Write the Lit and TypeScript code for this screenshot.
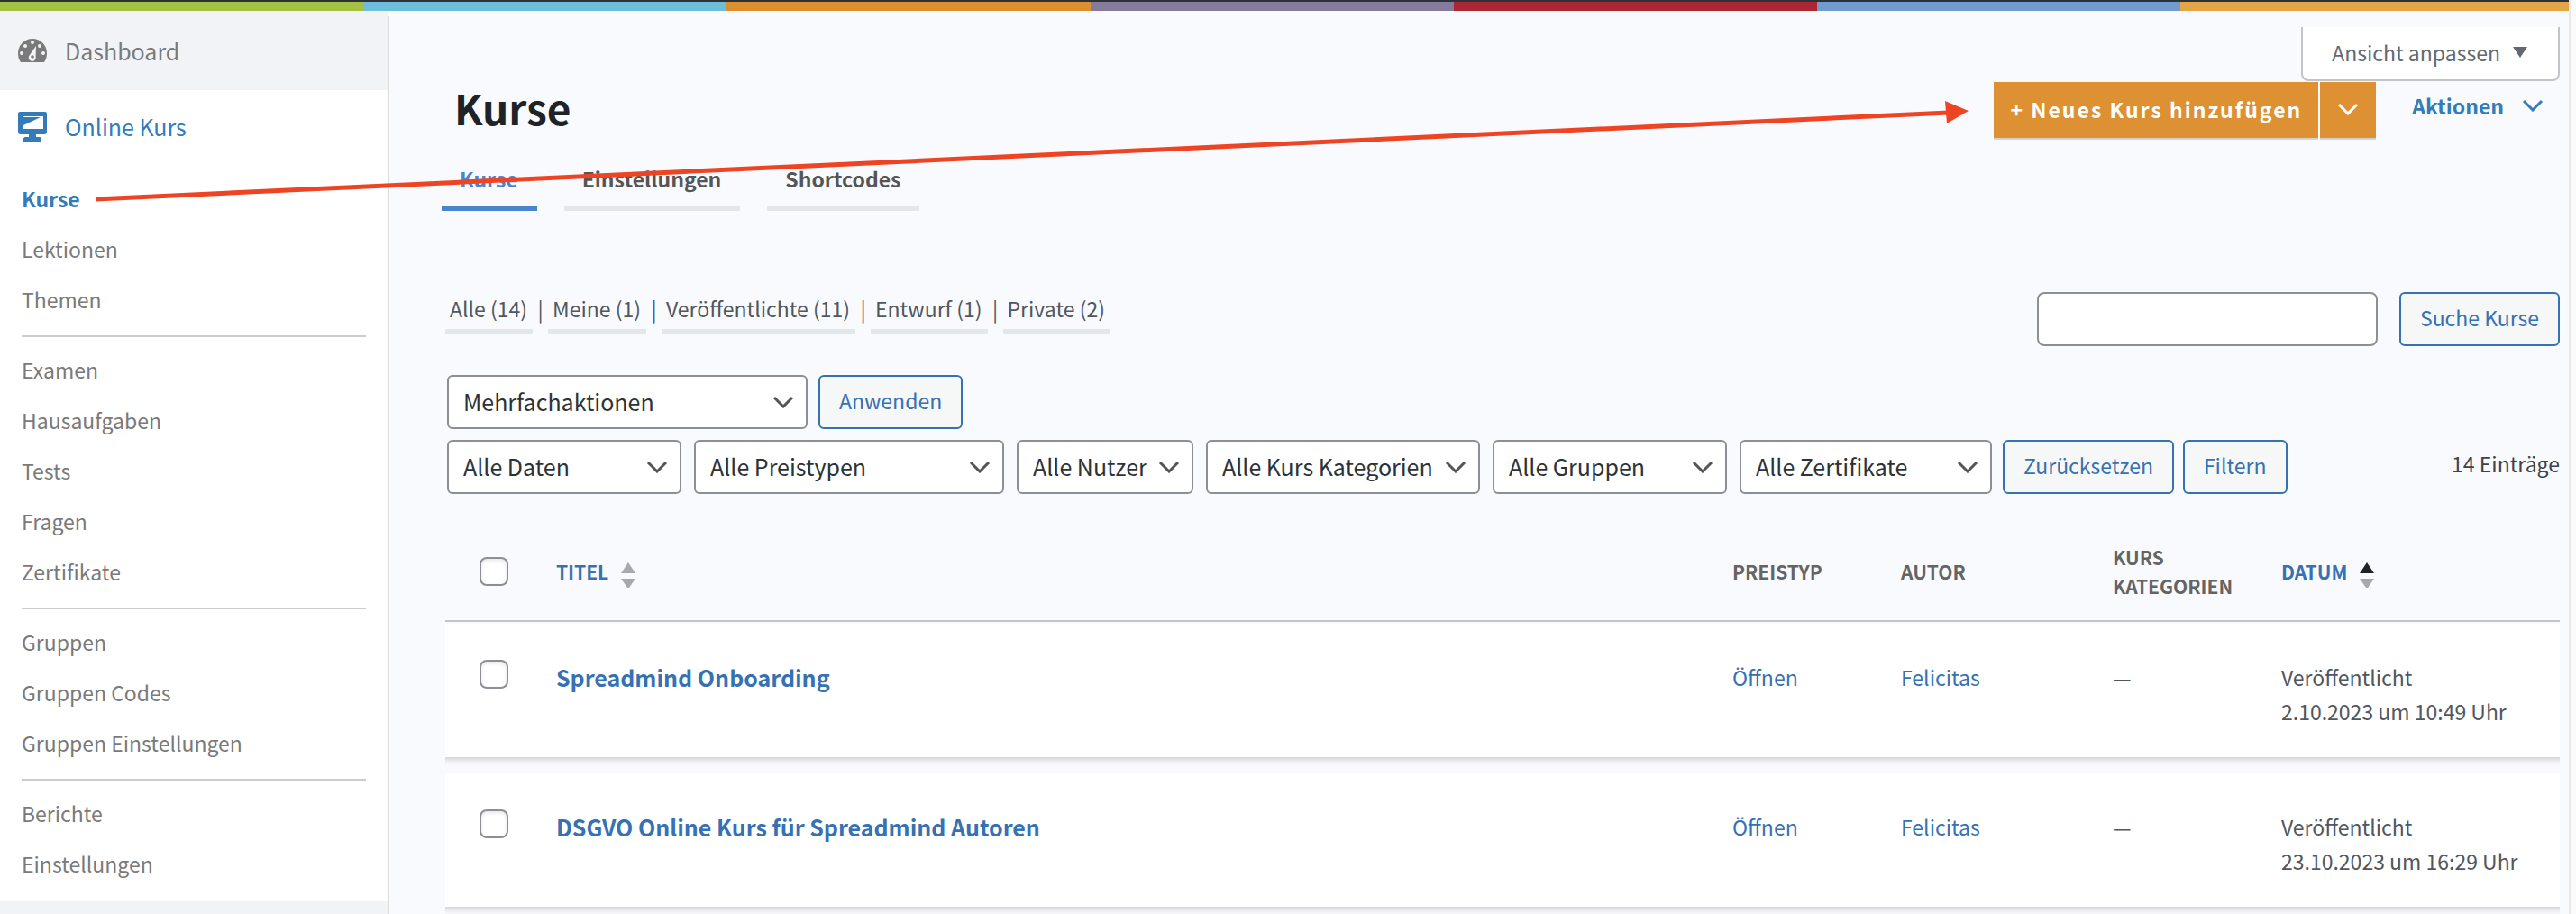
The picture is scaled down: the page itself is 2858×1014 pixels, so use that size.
import { LitElement, html, css, svg } from "lit";
import { customElement } from "lit/decorators.js";
import { classMap } from "lit/directives/class-map.js";

interface Course {
  title: string;
  price: string;
  author: string;
  categories: string;
  date: string;
}

const MENU: string[][] = [
  ["Kurse", "Lektionen", "Themen"],
  ["Examen", "Hausaufgaben", "Tests", "Fragen", "Zertifikate"],
  ["Gruppen", "Gruppen Codes", "Gruppen Einstellungen"],
  ["Berichte", "Einstellungen"],
];

const TABS = ["Kurse", "Einstellungen", "Shortcodes"];

const VIEWS = ["Alle (14)", "Meine (1)", "Veröffentlichte (11)", "Entwurf (1)", "Private (2)"];

const FILTERS = [
  { label: "Alle Daten", size: "s260" },
  { label: "Alle Preistypen", size: "s344" },
  { label: "Alle Nutzer", size: "s196" },
  { label: "Alle Kurs Kategorien", size: "s304" },
  { label: "Alle Gruppen", size: "s260" },
  { label: "Alle Zertifikate", size: "s280" },
];

const COURSES: Course[] = [
  {
    title: "Spreadmind Onboarding",
    price: "Öffnen",
    author: "Felicitas",
    categories: "—",
    date: "2.10.2023 um 10:49 Uhr",
  },
  {
    title: "DSGVO Online Kurs für Spreadmind Autoren",
    price: "Öffnen",
    author: "Felicitas",
    categories: "—",
    date: "23.10.2023 um 16:29 Uhr",
  },
];

const chevron = () => html`
  <svg class="chevron" viewBox="0 0 24 14" width="24" height="14" aria-hidden="true">
    <path d="M2 2 L12 12 L22 2" fill="none" stroke="currentColor" stroke-width="3" />
  </svg>
`;

const sorter = (active: boolean) => html`
  <svg class="sorter" viewBox="0 0 16 28" width="16" height="28" aria-hidden="true">
    <path d="M8 0 L16 12 H0 Z" fill=${active ? "#1d2327" : "#a7aaad"} />
    <path d="M0 18 H16 L9 28 H7 Z" fill="#a7aaad" />
  </svg>
`;

const dots = [
  [4, 16],
  [8, 8],
  [16, 4],
  [24, 8],
  [28, 16],
];

@customElement("app-root")
export class AppRoot extends LitElement {
  static styles = css`
    :host {
      display: block;
      font-family: "Noto Sans CJK SC", "Noto Sans", sans-serif;
      font-size: 23px;
      color: #50575e;
    }
    * {
      box-sizing: border-box;
    }
    a {
      color: inherit;
      text-decoration: none;
    }
    button,
    input,
    select {
      font: inherit;
      margin: 0;
    }
    svg {
      display: block;
      flex: none;
    }
    .page {
      position: relative;
      display: flex;
      height: 100vh;
      overflow: hidden;
      background: #fafafa;
    }
    .frame {
      flex: 1;
      min-width: 0;
      display: flex;
      flex-direction: column;
      background: #f9fafe;
    }
    .track {
      width: 8px;
      border-left: 2px solid #e8e8e8;
    }
    .stripes {
      flex: none;
      height: 12px;
      border-top: 2px solid #2c3338;
      background: linear-gradient(
        to right,
        #a5c141 0 14.14%,
        #6ebedb 14.14% 28.28%,
        #dd8f2f 28.28% 42.44%,
        #857b9c 42.44% 56.58%,
        #ac2634 56.58% 70.72%,
        #719cd0 70.72% 84.86%,
        #e4a547 84.86%
      );
    }
    .columns {
      flex: 1;
      min-height: 0;
      display: flex;
    }

    .sidebar {
      flex: none;
      width: 430px;
      background: #f2f3f7;
      color: #7a7a7a;
    }
    .top-link {
      display: flex;
      align-items: center;
      gap: 20px;
      height: 88px;
      padding: 0 20px;
      font-size: 25px;
    }
    .current {
      height: 84px;
      padding-bottom: 4px;
      color: #347cb8;
    }
    .group {
      background: #fff;
    }
    .menu {
      margin: 0;
      padding: 8px 24px 14px;
      list-style: none;
    }
    .menu-link {
      display: block;
      line-height: 56px;
    }
    .active {
      font-weight: 700;
      color: #347cb8;
    }
    .rule {
      height: 2px;
      margin: 12px 0 8px;
      background: #ccc;
    }

    .main {
      flex: 1;
      min-width: 0;
      margin-top: 6px;
      padding: 12px 10px 0 58px;
      border-left: 2px solid #dcdcdc;
    }
    .screen-options {
      display: flex;
      align-items: center;
      gap: 14px;
      height: 60px;
      margin-left: auto;
      padding: 0 34px 2px 32px;
      border: 2px solid #c3c4c7;
      border-top: 0;
      border-radius: 0 0 8px 8px;
      background: #fff;
      color: #646970;
    }
    .title-row {
      display: flex;
      align-items: flex-start;
      margin-top: 1px;
    }
    .title {
      flex: 1;
      margin: 0;
      padding-left: 14px;
      font-size: 46px;
      line-height: 56px;
      font-weight: 700;
      color: #1d2327;
    }
    .add {
      height: 64px;
      padding: 0 18px 2px;
      border: 0;
      border-bottom: 2px solid #d3d4d6;
      background: #dd9132;
      color: #fff;
      font-weight: 700;
      letter-spacing: 2px;
    }
    .add-more {
      display: flex;
      align-items: center;
      justify-content: center;
      width: 62px;
      margin-left: 2px;
    }
    .actions {
      display: flex;
      align-items: center;
      gap: 20px;
      height: 52px;
      margin-left: 40px;
      padding: 0 18px 0 0;
      border: 0;
      background: none;
      color: #347cb8;
      font-weight: 700;
    }
    .tabs {
      display: flex;
      gap: 30px;
      margin-top: 25px;
    }
    .tab {
      padding: 0 21px 12px 20px;
      border-bottom: 6px solid #e3e7ea;
      line-height: 36px;
      font-weight: 700;
      color: #555;
    }
    .tab-on {
      border-color: #4a84cd;
      color: #4a84cd;
    }
    .views-row {
      display: flex;
      align-items: flex-start;
      margin: 90px 0 32px 4px;
    }
    .views {
      flex: 1;
      display: flex;
      margin: 0;
      padding: 0;
      list-style: none;
      line-height: 36px;
    }
    .view {
      display: flex;
    }
    .view-link {
      padding: 0 6px 5px 5px;
      border-bottom: 6px solid #e2e8ea;
    }
    .bar {
      width: 17px;
      text-align: center;
    }
    .search {
      display: flex;
      gap: 24px;
    }
    .search-box {
      width: 378px;
      height: 60px;
      border: 2px solid #8c8f94;
      border-radius: 8px;
      background: #fff;
    }
    .button {
      height: 60px;
      padding: 0 21px 4px;
      border: 2px solid #3671b3;
      border-radius: 6px;
      background: #f6f7f7;
      color: #3671b3;
    }
    .tools {
      display: flex;
      align-items: center;
      margin: 0 0 12px 6px;
    }
    .filters {
      gap: 14px;
      margin-bottom: 0;
    }
    .bulk {
      gap: 12px;
    }
    .filter-buttons {
      display: flex;
      gap: 10px;
      margin-left: -2px;
    }
    .picker {
      display: grid;
      align-items: center;
    }
    .select {
      grid-area: 1 / 1;
      width: 100%;
      height: 60px;
      padding: 0 40px 2px 16px;
      border: 2px solid #8c8f94;
      border-radius: 6px;
      background: #fff;
      color: #2c3338;
      font-size: 25px;
      appearance: none;
    }
    .mark {
      grid-area: 1 / 1;
      justify-self: end;
      margin-right: 15px;
      color: #555;
      pointer-events: none;
    }
    .s196 {
      width: 196px;
    }
    .s260 {
      width: 260px;
    }
    .s280 {
      width: 280px;
    }
    .s304 {
      width: 304px;
    }
    .s344 {
      width: 344px;
    }
    .s400 {
      width: 400px;
    }
    .count {
      margin-left: auto;
      padding-bottom: 8px;
      color: #3c434a;
    }

    .table-wrap {
      margin: 32px 0 0 4px;
    }
    .table {
      width: 100%;
      table-layout: fixed;
      border-collapse: separate;
      border-spacing: 0;
    }
    .col-check {
      width: 103px;
    }
    .col-price {
      width: 187px;
    }
    .col-author {
      width: 235px;
    }
    .col-date {
      width: 329px;
    }
    .head {
      height: 110px;
      padding: 0 20px;
      border-bottom: 2px solid #c3c4c7;
      text-align: left;
      vertical-align: middle;
      font-size: 21px;
      line-height: 32px;
      font-weight: 700;
      color: #646464;
    }
    .sort {
      display: flex;
      align-items: center;
      gap: 14px;
      color: #3671b3;
    }
    .sorter {
      margin: 6px 0 -2px;
    }
    .cell {
      height: 166px;
      padding: 42px 20px 0;
      vertical-align: top;
      line-height: 38px;
      background:
        linear-gradient(#f9fafe, #f9fafe) top / 100% 2px no-repeat,
        linear-gradient(#d5d5da, #efeff4 5px, #faf9fe 9px) bottom / 100% 16px no-repeat,
        #fff;
    }
    .check-cell {
      padding-left: 38px;
      padding-right: 0;
    }
    .check {
      display: block;
      appearance: none;
      width: 32px;
      height: 32px;
      border: 2px solid #8c8f94;
      border-radius: 8px;
      background: #fff;
      box-shadow: inset 0 2px 4px rgba(0, 0, 0, 0.1);
    }
    .link {
      color: #3671b3;
    }
    .name {
      font-size: 25px;
      font-weight: 700;
    }
    .pointer {
      position: absolute;
      left: 0;
      top: 0;
      width: calc(100% - 674px);
      height: 240px;
      pointer-events: none;
    }
  `;

  private renderSidebar() {
    return html`
      <nav class="sidebar">
        <a class="top-link" href="#dashboard">
          <svg viewBox="0 0 32 26" width="32" height="26" aria-hidden="true">
            <path
              d="M3 26 C1 23 0 20 0 16 C0 7 7 0 16 0 C25 0 32 7 32 16 C32 20 31 23 29 26 Z"
              fill="#7a7a7a"
            />
            ${dots.map(([x, y]) => svg`<circle cx=${x} cy=${y} r="2" fill="#f2f3f7" />`)}
            <path d="M20 8 L19.600 20 A4 4 0 1 1 12.500 18.500 Z" fill="#f2f3f7" />
            <circle cx="16" cy="20" r="1.800" fill="#7a7a7a" />
          </svg>
          <span>Dashboard</span>
        </a>
        <div class="group">
          <a class="top-link current" href="#online-kurs">
            <svg viewBox="0 0 32 33" width="32" height="33" aria-hidden="true">
              <path
                fill="#347cb8"
                fill-rule="evenodd"
                d="M2 0 H30 Q32 0 32 2 V22 Q32 25 29 25 H20 V28 H24 Q26 28 26 30 V33 H6 V30 Q6 28 8 28 H12 V25 H3 Q0 25 0 22 V2 Q0 0 2 0 Z M5 5 V19 H28 V5 Z"
              />
              <path fill="#347cb8" d="M6 6 H25 L6 15 Z" />
            </svg>
            <span>Online Kurs</span>
          </a>
          <ul class="menu">
            ${MENU.map(
              (items, g) => html`
                ${g ? html`<li class="rule" role="separator"></li>` : ""}
                ${items.map(
                  (item, i) => html`
                    <li>
                      <a
                        class=${classMap({ "menu-link": true, active: g === 0 && i === 0 })}
                        href="#menu"
                        >${item}</a
                      >
                    </li>
                  `
                )}
              `
            )}
          </ul>
        </div>
      </nav>
    `;
  }

  private renderPicker(label: string, size: string) {
    return html`
      <label class="picker ${size}">
        <select class="select" aria-label=${label}>
          <option>${label}</option>
        </select>
        <span class="mark">${chevron()}</span>
      </label>
    `;
  }

  private renderTable() {
    return html`
      <div class="table-wrap">
        <table class="table">
          <colgroup>
            <col class="col-check" />
            <col />
            <col class="col-price" />
            <col class="col-author" />
            <col class="col-price" />
            <col class="col-date" />
          </colgroup>
          <thead>
            <tr>
              <th class="head check-cell">
                <input class="check" type="checkbox" aria-label="Alle auswählen" />
              </th>
              <th class="head"><a class="sort" href="#titel">TITEL ${sorter(false)}</a></th>
              <th class="head">PREISTYP</th>
              <th class="head">AUTOR</th>
              <th class="head">KURS KATEGORIEN</th>
              <th class="head"><a class="sort" href="#datum">DATUM ${sorter(true)}</a></th>
            </tr>
          </thead>
          <tbody>
            ${COURSES.map(
              (c) => html`
                <tr>
                  <td class="cell check-cell">
                    <input class="check" type="checkbox" aria-label=${c.title} />
                  </td>
                  <td class="cell"><a class="link name" href="#kurs">${c.title}</a></td>
                  <td class="cell"><a class="link" href="#preis">${c.price}</a></td>
                  <td class="cell"><a class="link" href="#autor">${c.author}</a></td>
                  <td class="cell">${c.categories}</td>
                  <td class="cell">Veröffentlicht<br />${c.date}</td>
                </tr>
              `
            )}
          </tbody>
        </table>
      </div>
    `;
  }

  render() {
    return html`
      <div class="page">
        <div class="frame">
          <div class="stripes"></div>
          <div class="columns">
            ${this.renderSidebar()}
            <main class="main">
              <button class="screen-options">
                Ansicht anpassen
                <svg viewBox="0 0 16 12" width="16" height="12" aria-hidden="true">
                  <path d="M0 0 H16 L8 12 Z" fill="#646970" />
                </svg>
              </button>
              <div class="title-row">
                <h1 class="title">Kurse</h1>
                <button class="add">+ Neues Kurs hinzufügen</button>
                <button class="add add-more" aria-label="Mehr">${chevron()}</button>
                <button class="actions">Aktionen ${chevron()}</button>
              </div>
              <nav class="tabs">
                ${TABS.map(
                  (t, i) =>
                    html`<a class=${classMap({ tab: true, "tab-on": i === 0 })} href="#tab">${t}</a>`
                )}
              </nav>
              <div class="views-row">
                <ul class="views">
                  ${VIEWS.map(
                    (v, i) => html`
                      <li class="view">
                        ${i ? html`<span class="bar">|</span>` : ""}
                        <a class="view-link" href="#ansicht">${v}</a>
                      </li>
                    `
                  )}
                </ul>
                <form class="search">
                  <input class="search-box" type="search" aria-label="Suche Kurse" />
                  <button class="button" type="button">Suche Kurse</button>
                </form>
              </div>
              <div class="tools bulk">
                ${this.renderPicker("Mehrfachaktionen", "s400")}
                <button class="button">Anwenden</button>
              </div>
              <div class="tools filters">
                ${FILTERS.map((f) => this.renderPicker(f.label, f.size))}
                <div class="filter-buttons">
                  <button class="button">Zurücksetzen</button>
                  <button class="button">Filtern</button>
                </div>
                <span class="count">14 Einträge</span>
              </div>
              ${this.renderTable()}
            </main>
          </div>
        </div>
        <div class="track"></div>
        <svg class="pointer" viewBox="0 0 2184 240" preserveAspectRatio="none" aria-hidden="true">
          <path d="M106 221 L2162 125" fill="none" stroke="#ee4423" stroke-width="5" />
          <path d="M2158 112 L2184 123 L2160 137 Z" fill="#ee4423" />
        </svg>
      </div>
    `;
  }
}
